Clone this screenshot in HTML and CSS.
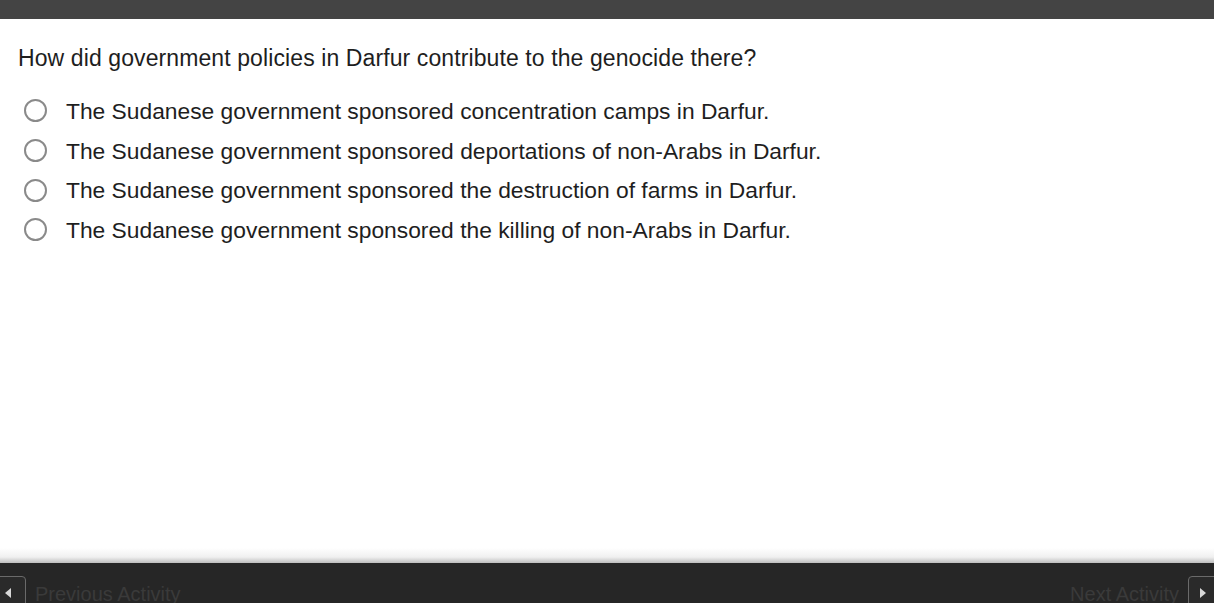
FILE: index.html
```html
<!DOCTYPE html>
<html>
<head>
<meta charset="utf-8">
<link rel="stylesheet" href="styles.css">
</head>
<body>
<div class="page">
  <header class="topbar"></header>
  <main class="content">
    <p class="question">How did government policies in Darfur contribute to the genocide there?</p>
    <ul class="options">
      <li class="option"><span class="radio"></span><span class="label">The Sudanese government sponsored concentration camps in Darfur.</span></li>
      <li class="option"><span class="radio"></span><span class="label">The Sudanese government sponsored deportations of non-Arabs in Darfur.</span></li>
      <li class="option"><span class="radio"></span><span class="label">The Sudanese government sponsored the destruction of farms in Darfur.</span></li>
      <li class="option"><span class="radio"></span><span class="label">The Sudanese government sponsored the killing of non-Arabs in Darfur.</span></li>
    </ul>
  </main>
  <div class="shade"></div>
  <footer class="bottombar">
    <div class="nav nav-prev">
      <span class="navbtn navbtn-left"><span class="tri tri-left"></span></span>
      <span class="navtext">Previous Activity</span>
    </div>
    <div class="nav nav-next">
      <span class="navtext">Next Activity</span>
      <span class="navbtn navbtn-right"><span class="tri tri-right"></span></span>
    </div>
  </footer>
</div>
</body>
</html>
```

FILE: styles.css
```css
html, body {
  margin: 0;
  padding: 0;
  background: #ffffff;
}
.page {
  width: 1214px;
  height: 603px;
  overflow: hidden;
  display: flex;
  flex-direction: column;
  font-family: "Liberation Sans", Arial, Helvetica, sans-serif;
  color: #1e1e1e;
}
.topbar {
  height: 19px;
  flex: none;
  background: #444444;
}
.content {
  flex: 1;
  padding: 25px 0 0 18px;
}
.question {
  margin: 0;
  font-size: 23px;
  line-height: 28px;
  letter-spacing: 0.1px;
}
.options {
  list-style: none;
  margin: 19px 0 0 0;
  padding: 0;
}
.option {
  display: flex;
  align-items: center;
  height: 39.7px;
}
.radio {
  width: 19px;
  height: 19px;
  border: 2px solid #8a8a8a;
  border-radius: 50%;
  margin-left: 6px;
  margin-right: 19px;
  flex: none;
}
.label {
  font-size: 22.8px;
  line-height: 28px;
}
.shade {
  height: 15px;
  flex: none;
  background: linear-gradient(to bottom, #ffffff 0%, #f0f0f0 60%, #bdbdbd 100%);
}
.bottombar {
  height: 40px;
  flex: none;
  background: #262626;
  display: flex;
  justify-content: space-between;
  align-items: flex-start;
  padding-top: 13px;
  box-sizing: border-box;
}
.nav {
  display: flex;
  align-items: flex-start;
  gap: 9px;
}
.navbtn {
  width: 30px;
  height: 34px;
  border: 1px solid #6a6a6a;
  border-radius: 4px;
  background: #2a2a2a;
  box-sizing: border-box;
  position: relative;
  flex: none;
}
.navbtn-left {
  margin-left: -4px;
}
.navbtn-right {
  margin-right: -4px;
}
.tri {
  position: absolute;
  top: 11px;
  width: 0;
  height: 0;
  border-top: 5px solid transparent;
  border-bottom: 5px solid transparent;
}
.tri-left {
  left: 8px;
  border-right: 6px solid #d8d8d8;
}
.tri-right {
  left: 11px;
  border-left: 6px solid #d8d8d8;
}
.navtext {
  font-size: 20px;
  line-height: 22px;
  padding-top: 7px;
  color: #3a3a3a;
}
```
